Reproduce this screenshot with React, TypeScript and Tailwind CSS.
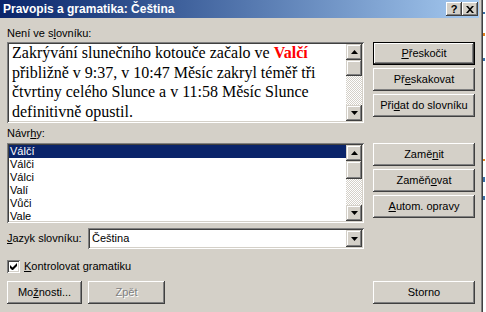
import React from 'react';

const raised =
  'bg-[#d4d0c8] shadow-[inset_-1px_-1px_#404040,inset_1px_1px_#fff,inset_-2px_-2px_#808080,inset_2px_2px_#d4d0c8]';
const raisedDefault =
  'bg-[#d4d0c8] shadow-[inset_0_0_0_1px_#000,inset_-2px_-2px_#404040,inset_2px_2px_#fff,inset_-3px_-3px_#808080,inset_3px_3px_#d4d0c8]';
const arrowBtn =
  'bg-[#d4d0c8] shadow-[inset_-1px_-1px_#404040,inset_1px_1px_#d4d0c8,inset_-2px_-2px_#808080,inset_2px_2px_#fff]';
const sunken =
  'shadow-[inset_1px_1px_#808080,inset_-1px_-1px_#fff,inset_2px_2px_#404040,inset_-2px_-2px_#d4d0c8]';

function Arrow({ dir }: { dir: 'up' | 'down' }) {
  return (
    <svg width="7" height="4" viewBox="0 0 7 4" className="block">
      {dir === 'up' ? (
        <polygon points="3.5,0 7,4 0,4" fill="#000" />
      ) : (
        <polygon points="0,0 7,0 3.5,4" fill="#000" />
      )}
    </svg>
  );
}

function ScrollBar({ thumb = 16 }: { thumb?: number }) {
  return (
    <div className="flex w-4 flex-col">
      <div className={`flex h-4 items-center justify-center ${arrowBtn}`}>
        <Arrow dir="up" />
      </div>
      <div className={`w-4 ${arrowBtn}`} style={{ height: thumb }} />
      <div className="flex-1 bg-[repeating-conic-gradient(#fff_0_25%,#d4d0c8_0_50%)] bg-[length:2px_2px]" />
      <div className={`flex h-4 items-center justify-center ${arrowBtn}`}>
        <Arrow dir="down" />
      </div>
    </div>
  );
}

function Btn({
  children,
  width = 'w-[102px]',
  isDefault = false,
  disabled = false,
}: {
  children: React.ReactNode;
  width?: string;
  isDefault?: boolean;
  disabled?: boolean;
}) {
  return (
    <div
      className={`flex h-[23px] ${width} items-center justify-center ${isDefault ? raisedDefault : raised} ${
        disabled ? 'text-[#808080] [text-shadow:1px_1px_0_#fff]' : 'text-black'
      }`}
    >
      {children}
    </div>
  );
}

const suggestions = ['Válčí', 'Válči', 'Válci', 'Valí', 'Vůči', 'Vale'];

export default function App() {
  return (
    <div className="flex h-[312px] w-[486px] overflow-hidden bg-white font-['Liberation_Sans',Arial,sans-serif] text-[11px] leading-[13px] text-black">
      {/* dialog window */}
      <div className="flex w-[483px] flex-col bg-[#d4d0c8] pr-[4px] shadow-[inset_-1px_0_#404040,inset_-2px_0_#808080]">
        {/* title bar */}
        <div className="flex h-[18px] items-center bg-linear-to-r from-[#0a246a] to-[#a6caf0] pl-[3px] pr-[1px]">
          <span className="text-[12px] font-bold text-white">Pravopis a gramatika: Čeština</span>
          <div className="ml-auto flex">
            <div className={`flex h-[14px] w-[16px] items-center justify-center ${raised}`}>
              <span className="text-[11px] font-bold leading-none">?</span>
            </div>
            <div className={`flex h-[14px] w-[16px] items-center justify-center ${raised}`}>
              <svg width="8" height="7" viewBox="0 0 8 7">
                <path d="M0 0h2l2 2.2 2-2.2h2l-3 3.5 3 3.5h-2l-2-2.2-2 2.2h-2l3-3.5z" fill="#000" />
              </svg>
            </div>
          </div>
        </div>

        {/* body */}
        <div className="flex flex-col pl-[7px]">
          <div className="mt-[9px] h-[13px]">
            Není ve s<u>l</u>ovníku:
          </div>
          <div className="mt-[2px] flex gap-[9px]">
            <div className={`flex h-[81px] w-[357px] bg-white p-[2px] ${sunken}`}>
              <div className="flex-1 overflow-hidden pl-[3px] font-['Liberation_Serif','Times_New_Roman',serif] text-[16px] leading-[19.5px] text-black">
                <div className="-mt-[1px] whitespace-nowrap">
                  Zakrývání slunečního kotouče začalo ve{' '}
                  <span className="font-bold text-[#ff0000]">Valčí</span>
                </div>
                <div className="whitespace-nowrap">přibližně v 9:37, v 10:47 Měsíc zakryl téměř tři</div>
                <div className="whitespace-nowrap">čtvrtiny celého Slunce a v 11:58 Měsíc Slunce</div>
                <div className="whitespace-nowrap">definitivně opustil.</div>
              </div>
              <ScrollBar thumb={16} />
            </div>
            <div className="flex flex-col gap-[3px]">
              <Btn isDefault>
                <span>
                  <u>P</u>řeskočit
                </span>
              </Btn>
              <Btn>
                <span>
                  Př<u>e</u>skakovat
                </span>
              </Btn>
              <Btn>
                <span>
                  Při<u>d</u>at do slovníku
                </span>
              </Btn>
            </div>
          </div>

          <div className="mt-[4px] h-[13px]">
            Návr<u>h</u>y:
          </div>
          <div className="mt-[3px] flex gap-[9px]">
            <div className={`flex h-[80px] w-[357px] bg-white p-[2px] ${sunken}`}>
              <div className="flex-1 overflow-hidden">
                {suggestions.map((s, i) => (
                  <div
                    key={s}
                    className={`h-[13px] pl-[1px] leading-[13px] ${i === 0 ? 'bg-[#0a246a] text-white' : 'text-black'}`}
                  >
                    {s}
                  </div>
                ))}
              </div>
              <ScrollBar thumb={18} />
            </div>
            <div className="flex flex-col gap-[3px]">
              <Btn>
                <span>
                  Zamě<u>n</u>it
                </span>
              </Btn>
              <Btn>
                <span>
                  Zaměň<u>o</u>vat
                </span>
              </Btn>
              <Btn>
                <span>
                  <u>A</u>utom. opravy
                </span>
              </Btn>
            </div>
          </div>

          <div className="mt-[5px] flex h-[21px] items-center">
            <div className="w-[81px]">
              <u>J</u>azyk slovníku:
            </div>
            <div className={`flex h-[21px] w-[276px] bg-white p-[2px] ${sunken}`}>
              <div className="flex flex-1 items-center pl-[2px]">Čeština</div>
              <div className={`flex w-4 items-center justify-center ${arrowBtn}`}>
                <Arrow dir="down" />
              </div>
            </div>
          </div>

          <div className="mt-[11px] flex h-[13px] items-center">
            <div className={`flex h-[13px] w-[13px] items-center justify-center bg-white ${sunken}`}>
              <svg width="7" height="7" viewBox="0 0 7 7">
                <path d="M0 2v3l2 2h1l4-4V0L2.5 4.5z" fill="#000" />
              </svg>
            </div>
            <span className="ml-[4px]">
              <u>K</u>ontrolovat gramatiku
            </span>
          </div>

          <div className="mt-[8px] flex pr-[4px]">
            <Btn width="w-[75px]">
              <span>
                Mo<u>ž</u>nosti...
              </span>
            </Btn>
            <div className="ml-[6px]">
              <Btn width="w-[77px]" disabled>
                <span>Zpět</span>
              </Btn>
            </div>
            <div className="ml-auto">
              <Btn>
                <span>Storno</span>
              </Btn>
            </div>
          </div>
        </div>
      </div>

      {/* background behind the dialog */}
      <div className="flex w-[3px] flex-col">
        <div className="mt-[12px] h-[2px] w-[2px] bg-[#3a6ea5]" />
        <div className="mt-[19px] h-[3px] w-[2px] bg-[#e08020]" />
        <div className="mt-[22px] h-[3px] w-[2px] bg-[#3a6ea5]" />
        <div className="mt-[98px] h-[2px] w-[2px] bg-[#e08020]" />
        <div className="mt-[16px] h-[5px] w-[2px] bg-[#3a6ea5]" />
        <div className="mt-[14px] h-[4px] w-[2px] bg-[#3a6ea5]" />
      </div>
    </div>
  );
}
